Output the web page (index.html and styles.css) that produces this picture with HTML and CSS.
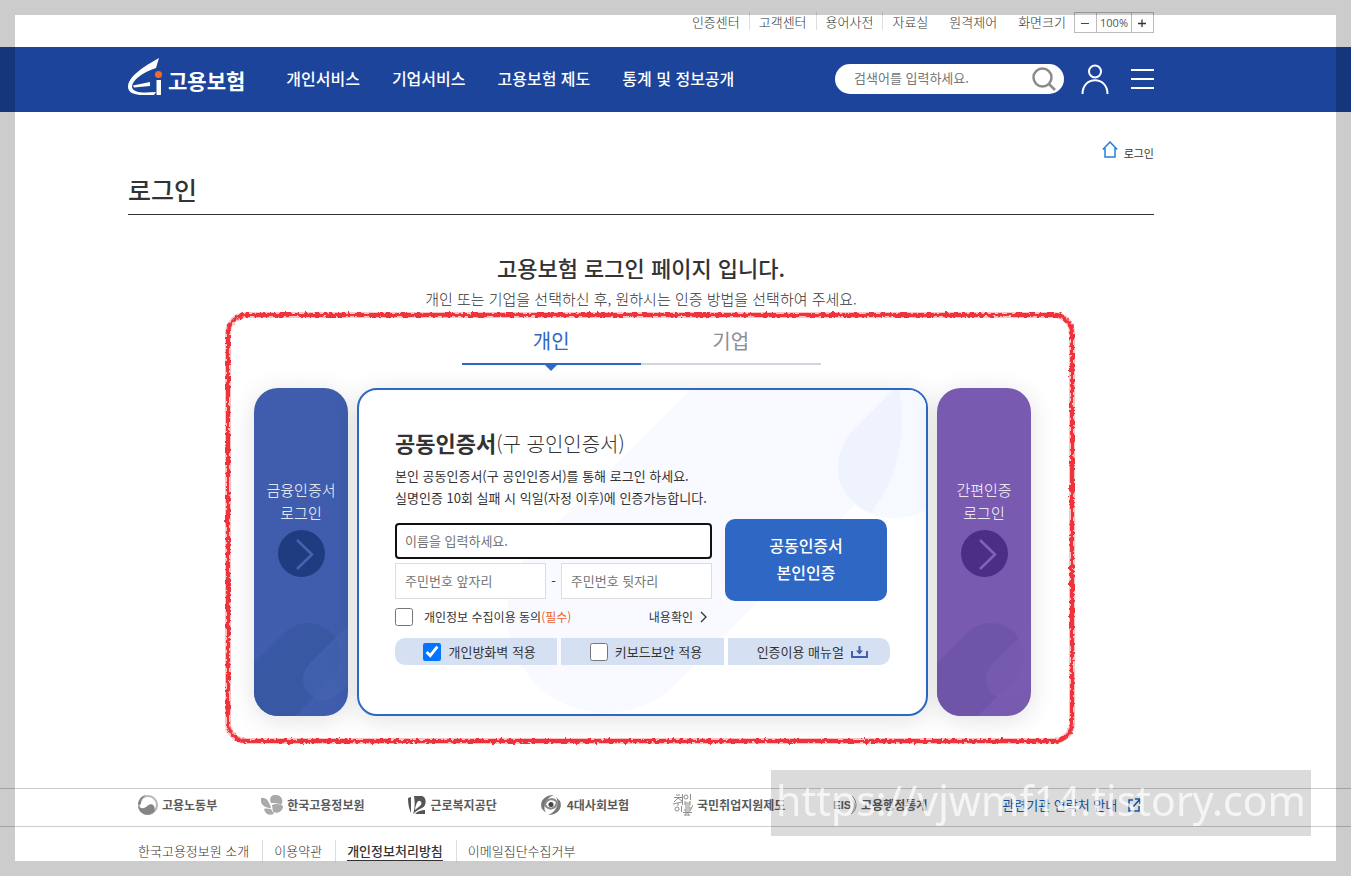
FILE: index.html
```html
<!DOCTYPE html>
<html lang="ko">
<head>
<meta charset="utf-8">
<title>로그인 | 고용보험</title>
<link rel="stylesheet" href="styles.css">
</head>
<body>
<div class="topbar wrap">
  <nav class="util" aria-label="바로가기">
    <a class="util-link" href="#">인증센터</a>
    <a class="util-link" href="#">고객센터</a>
    <a class="util-link" href="#">용어사전</a>
    <a class="util-link plain" href="#">자료실</a>
    <a class="util-link plain" href="#">원격제어</a>
    <span class="util-link plain last">화면크기</span>
  </nav>
  <div class="zoom">
    <button class="zoom-btn" type="button" aria-label="축소"><svg width="9" height="9" viewBox="0 0 9 9"><path d="M0 5.500h8" stroke="#444"/></svg></button>
    <span class="zoom-value">100%</span>
    <button class="zoom-btn" type="button" aria-label="확대"><svg width="9" height="9" viewBox="0 0 9 9"><path d="M0 5.500h8M4 1.500v8" stroke="#333" stroke-width="1.300"/></svg></button>
  </div>
</div>

<header class="header">
  <div class="header-inner wrap">
    <a class="logo" href="#">
      <svg class="logo-mark" width="36" height="38" viewBox="0 0 36 38">
        <path d="M31 0C17 8 0 18 0 29c0 6 7 8 15 8l11 0 2-3C15 35 5 35 4 29 4 22 15 14 28 10z" fill="#fff"/>
        <path d="M5 27.500L22 24v4L6 29.500z" fill="#fff"/>
        <path d="M28.500 22H33v15h-4.500z" fill="#fff"/>
        <circle cx="30.500" cy="16.500" r="3.500" fill="#f26b2b"/>
      </svg>
      <span class="logo-text">고용보험</span>
    </a>
    <nav class="gnb" aria-label="주 메뉴">
      <a href="#">개인서비스</a>
      <a href="#">기업서비스</a>
      <a href="#">고용보험 제도</a>
      <a href="#">통계 및 정보공개</a>
    </nav>
    <form class="search">
      <input class="search-input" type="text" aria-label="검색어" placeholder="검색어를 입력하세요.">
      <button class="icon-btn" type="button" aria-label="검색"><svg width="24" height="24" viewBox="0 0 24 24" fill="none" stroke="#8b8b8b" stroke-width="2.500"><circle cx="10.500" cy="10.500" r="9"/><path d="M17 17l6 6"/></svg></button>
    </form>
    <button class="icon-btn user" type="button" aria-label="내 정보"><svg width="28" height="30" viewBox="0 0 28 30" fill="none" stroke="#fff" stroke-width="2"><circle cx="14" cy="7.500" r="6"/><path d="M1.500 30C1.500 11.500 26.500 11.500 26.500 30"/></svg></button>
    <button class="icon-btn" type="button" aria-label="전체 메뉴"><svg width="23" height="22" viewBox="0 0 23 22" stroke="#fff" stroke-width="2"><path d="M0 2h23M0 11h23M0 20h23"/></svg></button>
  </div>
</header>

<main class="main wrap">
  <div class="crumb">
    <a class="home" href="#" aria-label="홈"><svg width="16" height="17" viewBox="0 0 16 17" fill="none" stroke="#2380d8" stroke-width="1.500"><path d="M.8 8.500L8 1l7.200 7.500M3 7v9h10V7"/></svg></a>
    <span>로그인</span>
  </div>
  <h1 class="page-title">로그인</h1>
  <h2 class="lead">고용보험 로그인 페이지 입니다.</h2>
  <p class="sub">개인 또는 기업을 선택하신 후, 원하시는 인증 방법을 선택하여 주세요.</p>

  <section class="login">
    <svg class="marker" aria-hidden="true">
      <defs>
        <filter id="rough" filterUnits="userSpaceOnUse" x="0" y="0" width="100%" height="100%">
          <feTurbulence type="fractalNoise" baseFrequency="0.250" numOctaves="2" seed="4"/>
          <feDisplacementMap in="SourceGraphic" scale="6" xChannelSelector="R" yChannelSelector="G"/>
          <feGaussianBlur stdDeviation="0.600"/>
        </filter>
      </defs>
      <rect class="marker-soft" x="4" y="4" rx="18"/>
      <rect class="marker-line" x="4" y="4" rx="18" filter="url(#rough)"/>
    </svg>
    <div class="tabs" role="tablist">
      <button class="tab active" type="button" role="tab" aria-selected="true">개인</button>
      <button class="tab" type="button" role="tab" aria-selected="false">기업</button>
    </div>
    <div class="panels">
      <a class="side blue" href="#">
        <svg class="art" viewBox="0 0 94 328"><path d="M54 268L-46 368" stroke="#3958a3" stroke-width="66" stroke-linecap="round"/><path d="M70 291L170 191" stroke="#4465b2" stroke-opacity=".6" stroke-width="42" stroke-linecap="round"/></svg>
        <span class="side-text">금융인증서<br>로그인</span>
        <svg class="arrow" width="47" height="47" viewBox="0 0 47 47"><circle cx="23.500" cy="23.500" r="23.500" fill="#203c80"/><path d="M19 10l15 14.500L19 39" fill="none" stroke="#4663ae" stroke-width="2.500"/></svg>
      </a>
      <form class="card">
        <svg class="art" viewBox="0 0 567 324" preserveAspectRatio="xMinYMin slice">
          <path d="M247 224L647-176" stroke="#f8faff" stroke-width="198" stroke-linecap="round"/>
          <path d="M481 92C488 116 512 128 534 128c14 0 24-3 33-8V0H530z" fill="#f6f9ff"/>
          <path d="M534 0L498 36C480 54 476 75 481 92c6 16 17 24 31 31C540 86 548 40 540 0z" fill="#eef3fd"/>
        </svg>
        <h3 class="card-title"><strong>공동인증서</strong><span>(구 공인인증서)</span></h3>
        <p class="desc">본인 공동인증서(구 공인인증서)를 통해 로그인 하세요.<br>실명인증 10회 실패 시 익일(자정 이후)에 인증가능합니다.</p>
        <div class="entry">
          <div class="fields">
            <input class="field focused" type="text" aria-label="이름" placeholder="이름을 입력하세요." autofocus>
            <div class="rrn">
              <input class="field" type="text" aria-label="주민번호 앞자리" placeholder="주민번호 앞자리">
              <span>-</span>
              <input class="field" type="password" aria-label="주민번호 뒷자리" placeholder="주민번호 뒷자리">
            </div>
          </div>
          <button class="submit" type="button">공동인증서<br>본인인증</button>
        </div>
        <div class="consent">
          <label class="check"><input type="checkbox"><span>개인정보 수집이용 동의<em>(필수)</em></span></label>
          <a class="view" href="#">내용확인<svg width="7" height="12" viewBox="0 0 7 12" fill="none" stroke="#333" stroke-width="1.300"><path d="M1 1l5 5-5 5"/></svg></a>
        </div>
        <div class="options">
          <label class="option"><input type="checkbox" checked>개인방화벽 적용</label>
          <label class="option"><input type="checkbox">키보드보안 적용</label>
          <a class="option" href="#">인증이용 매뉴얼<svg width="17" height="12" viewBox="0 0 17 12" fill="none" stroke="#405fb0" stroke-width="2"><path d="M1 5v6h15V5M8.500 0v7"/><path d="M5 4.500h7L8.500 8.500z" fill="#405fb0" stroke="none"/></svg></a>
        </div>
      </form>
      <a class="side purple" href="#">
        <svg class="art" viewBox="0 0 94 328"><path d="M54 268L-46 368" stroke="#6f55a8" stroke-width="66" stroke-linecap="round"/><path d="M70 291L170 191" stroke="#7a5eb2" stroke-opacity=".6" stroke-width="42" stroke-linecap="round"/></svg>
        <span class="side-text">간편인증<br>로그인</span>
        <svg class="arrow" width="47" height="47" viewBox="0 0 47 47"><circle cx="23.500" cy="23.500" r="23.500" fill="#4d2e86"/><path d="M19 10l15 14.500L19 39" fill="none" stroke="#8062b8" stroke-width="2.500"/></svg>
      </a>
    </div>
  </section>
</main>

<footer class="footer">
  <div class="partners">
    <div class="wrap partner-list">
      <a href="#"><svg width="20" height="20" viewBox="0 0 20 20"><circle cx="10" cy="10" r="9" fill="none" stroke="#b5b5b5" stroke-width="2"/><path d="M0 10c1 4 5 4 8 2 3-3 6-4 8-1 1 2 1 4 0 6C10 23 0 19 0 10z" fill="#858585"/><path d="M0 10C0 5 3 1 8 0 4 3 3 6 3 9z" fill="#858585"/></svg>고용노동부</a>
      <a href="#"><svg width="22" height="20" viewBox="0 0 22 20" fill="#a9abaa"><path d="M10 8C7 2 12-1 16 0c5 1 7 6 4 10-3-2-7-2-10-2z"/><path d="M0 3c5-1 8 3 10 10C3 13-1 9 0 3z"/><path d="M11 10c5-2 8-1 11 1 0 6-6 8-10 6z"/><path d="M3 14c3-1 5 0 7 0l3 5c-5 2-9 0-10-5z"/></svg>한국고용정보원</a>
      <a class="wide" href="#"><svg width="18" height="18" viewBox="0 0 18 18"><path d="M0 2l3-1v16C1 13 0 8 0 2zM6 0h7c6 0 6 10 1 12-3 1-6 3-9 6 2-5 2-12 1-18z" fill="#555"/><path d="M7 14c1-8 4-11 6-8s-3 5-6 8z" fill="#fff"/><path d="M7 18c3-3 6-4 10-4v4z" fill="#555"/></svg>근로복지공단</a>
      <a class="wide four" href="#"><svg width="20" height="22" viewBox="0 0 20 22"><path d="M13 1C3 1-2 8 1 15l4 4C1 12 5 4 13 1zM7 21c10 0 15-7 12-14l-4-4c4 7 0 15-8 18z" fill="#777"/><path d="M4 11c1-6 8-8 12-3-1 7-8 9-12 3z" fill="none" stroke="#888" stroke-width="2"/><circle cx="10" cy="10.500" r="2.500" fill="#444"/></svg>4대사회보험</a>
      <a class="wide" href="#"><svg width="20" height="22" viewBox="0 0 20 22" fill="none" stroke="#8c8c8c"><path d="M3 1h4M1 3.500h8M5 4L1 8M5 4l4 3M0 10l9-2M5 9v3M9.500 0v11"/><circle cx="13" cy="3" r="2"/><path d="M17.500 0v6M12 7v4h5V7M12 9h5M12 13h5v2h-5v2h5M10 18.500h9M20 11l-3 6"/><circle cx="4" cy="15" r="2"/><path d="M8.500 12v6M12 20h4v2h-4z"/></svg>국민취업지원제도</a>
      <a class="eis" href="#"><span class="eis-mark">EIS<svg width="6" height="20" viewBox="0 0 6 20" fill="none" stroke="#8a8a8a"><path d="M1 1c6 6 5 14-1 18M0 4c4 4 4 9 1 13"/></svg></span>고용행정통계</a>
      <a class="contact" href="#">관련기관 연락처 안내<svg width="13" height="14" viewBox="0 0 13 14" fill="none" stroke="#1c62b5" stroke-width="1.500"><path d="M5 2H1v11h10V8M7 1h5v5M12 1L5 9"/></svg></a>
    </div>
  </div>
  <nav class="policy wrap" aria-label="하단 메뉴">
    <a href="#">한국고용정보원 소개</a>
    <a href="#">이용약관</a>
    <a class="strong" href="#"><span>개인정보처리방침</span></a>
    <a href="#">이메일집단수집거부</a>
  </nav>
</footer>

<div class="frame"></div>
<div class="watermark">https://vjwmf14.tistory.com</div>
</body>
</html>
```
FILE: styles.css
```css
* { box-sizing: border-box; }

body {
  margin: 0;
  height: 100vh;
  overflow: hidden;
  background: #fff;
  color: #333;
  font-family: "Noto Sans CJK KR", sans-serif;
  font-size: 13px;
  line-height: 20px;
}

a { color: inherit; text-decoration: none; }
button, input { font: inherit; }
button { padding: 0; border: 0; background: none; cursor: pointer; }
svg { display: block; flex: none; }

.wrap { padding-left: 128px; padding-right: 197px; }

/* Utility bar */
.topbar {
  display: flex;
  justify-content: flex-end;
  height: 47px;
  padding-top: 12px;
}
.util { display: flex; color: #333; font-weight: 300; }
.util-link { height: 18px; padding: 0 9px; border-right: 1px solid #ddd; }
.util-link.plain { padding-right: 12px; border-right: 0; }
.util-link.last { padding-right: 8px; }
.zoom { display: flex; height: 21px; border: 1px solid #bbb; }
.zoom-btn { display: flex; align-items: center; justify-content: center; width: 21px; }
.zoom-value {
  width: 36px;
  border: solid #bbb;
  border-width: 0 1px;
  color: #555;
  font-family: "Open Sans", sans-serif;
  font-size: 11px;
  text-align: center;
}

/* Header */
.header { background: #1c449b; color: #fff; }
.header-inner { display: flex; align-items: center; height: 65px; padding-bottom: 2px; }
.logo { display: flex; align-items: center; gap: 4px; margin-top: -3px; }
.logo-text { padding-top: 5px; font-size: 21px; font-weight: 700; line-height: 24px; }
.gnb { display: flex; gap: 32px; margin: 0 auto 0 41px; padding-bottom: 2px; font-size: 16px; font-weight: 500; white-space: nowrap; }
.search {
  display: flex;
  align-items: center;
  width: 229px;
  height: 30px;
  padding: 0 8px 0 19px;
  border-radius: 15px;
  background: #fff;
}
.search-input { flex: 1; min-width: 0; padding: 0 0 2px; border: 0; outline: 0; background: none; }
::placeholder { color: #757575; opacity: 1; }
.icon-btn.user { margin: 0 22px 0 17px; }

/* Page heading */
.main { padding-top: 29px; }
.crumb { display: flex; justify-content: flex-end; gap: 6px; height: 24px; font-size: 11px; line-height: 24px; }
.page-title {
  margin: 5px 0 0;
  height: 45px;
  border-bottom: 1px solid #333;
  font-size: 25px;
  font-weight: 500;
  line-height: 38px;
}
.lead { margin: 36px 0 0; font-size: 22px; font-weight: 500; line-height: 32px; text-align: center; }
.sub { margin: 6px 0 0; color: #333; font-size: 15px; font-weight: 300; line-height: 20px; text-align: center; }

/* Login area */
.login { position: relative; width: 852px; max-width: 100%; height: 434px; margin: 2px auto 0; padding-top: 8px; }
.marker { position: absolute; top: 0; left: 9px; width: 100%; height: 100%; pointer-events: none; }
.marker rect { width: calc(100% - 8px); height: calc(100% - 8px); fill: none; }
.marker-soft { stroke: #fbc3c5; stroke-width: 6; }
.marker-line { stroke: #f0303a; stroke-width: 4; }

.tabs { display: flex; width: 359px; margin: 0 auto; }
.tab {
  position: relative;
  flex: 1;
  height: 46px;
  border-bottom: 2px solid #d1d6de;
  color: #8c8f98;
  font-size: 20px;
}
.tab.active { border-color: #2e68c4; color: #2e68c4; }
.tab.active::after {
  content: "";
  position: absolute;
  top: 100%;
  left: 50%;
  margin-left: -8px;
  border: solid transparent;
  border-width: 8px 8px 0;
  border-top-color: #2e68c4;
}

.panels { display: flex; justify-content: center; gap: 9px; margin-top: 23px; padding-left: 3px; }
.side, .card { position: relative; overflow: hidden; height: 328px; box-shadow: 0 4px 26px rgba(0, 0, 0, .12); }
.art { position: absolute; inset: 0; width: 100%; height: 100%; }
.side {
  flex: none;
  width: 94px;
  padding-top: 90px;
  border-radius: 24px;
  color: #fff;
  font-size: 15px;
  font-weight: 300;
  line-height: 23px;
  text-align: center;
}
.blue { background: #3f5dac; }
.purple { background: #785ab0; }
.side-text, .arrow { position: relative; }
.arrow { margin: 6px auto 0; }
.card { width: 571px; padding: 36px 36px 0; border: 2px solid #2e68c4; border-radius: 20px; background: #fff; }
.card > :not(.art) { position: relative; }

.card-title { display: flex; align-items: baseline; margin: 0; font-size: 22px; font-weight: 300; line-height: 32px; }
.card-title strong { font-weight: 700; }
.card-title span { font-size: 20px; }
.desc { margin: 5px 0 0; line-height: 22px; }
.entry { display: flex; gap: 13px; margin-top: 10px; }
.fields { width: 317px; padding-top: 4px; }
.field { width: 100%; min-width: 0; height: 36px; padding: 0 9px 2px; border: 1px solid #ddd; border-radius: 0; outline: 0; background: #fff; }
.field.focused { display: block; padding: 0 8px 2px; border: 2px solid #111; border-radius: 4px; }
.rrn { display: flex; align-items: center; gap: 5px; margin-top: 4px; }
.submit { width: 162px; height: 82px; padding-bottom: 2px; border-radius: 10px; background: #2e68c4; color: #fff; font-size: 16px; font-weight: 500; line-height: 27px; }

.consent { display: flex; justify-content: space-between; width: 312px; margin-top: 5px; font-size: 12px; line-height: 22px; }
.check { display: flex; align-items: center; gap: 11px; }
.check em { color: #f0641e; font-style: normal; }
.view { display: flex; align-items: center; gap: 7px; }
input[type="checkbox"] { width: 18px; height: 18px; margin: 0; accent-color: #0075ff; }
.options { display: flex; gap: 4px; width: 495px; margin-top: 10px; }
.option { display: flex; flex: 1; align-items: center; justify-content: center; gap: 7px; height: 27px; padding-left: 7px; background: #d5e0f2; }
.option:first-child { border-radius: 10px 0 0 10px; }
.option:last-child { border-radius: 0 10px 10px 0; }

/* Footer */
.footer { margin-top: 43px; white-space: nowrap; }
.partners { border: solid #ccc; border-width: 1px 0; }
.partner-list { display: flex; align-items: center; gap: 44px; height: 37px; padding-bottom: 5px; padding-left: 138px; color: #5b5b5b; font-size: 12px; font-weight: 700; }
.partner-list a { display: flex; align-items: center; gap: 4px; }
.partner-list .four { gap: 6px; }
.partner-list .eis { margin-left: 4px; }
.eis-mark { display: flex; align-items: center; font-family: "Liberation Sans", sans-serif; font-size: 11px; }
.partner-list .contact { gap: 11px; margin-left: 31px; color: #0d5bb5; font-size: 13px; font-weight: 400; }
.policy { display: flex; padding-top: 13px; padding-left: 138px; color: #333; font-weight: 300; }
.policy a { padding: 0 13px 0 11px; border-right: 1px solid #ddd; line-height: 22px; }
.policy a:first-child { padding-left: 0; }
.policy a:last-child { border: 0; }
.policy .strong { font-weight: 500; }
.policy .strong span { border-bottom: 1px solid #333; }

/* Overlays */
.frame { position: fixed; inset: 0; border: 15px solid rgba(0, 0, 0, .2); pointer-events: none; }
.watermark {
  position: fixed;
  right: 40px;
  bottom: 40px;
  width: 540px;
  height: 66px;
  background: rgba(0, 0, 0, .14);
  color: rgba(255, 255, 255, .7);
  font-family: "Noto Sans", sans-serif;
  font-size: 41px;
  line-height: 60px;
  text-align: center;
  white-space: nowrap;
  pointer-events: none;
}
```
